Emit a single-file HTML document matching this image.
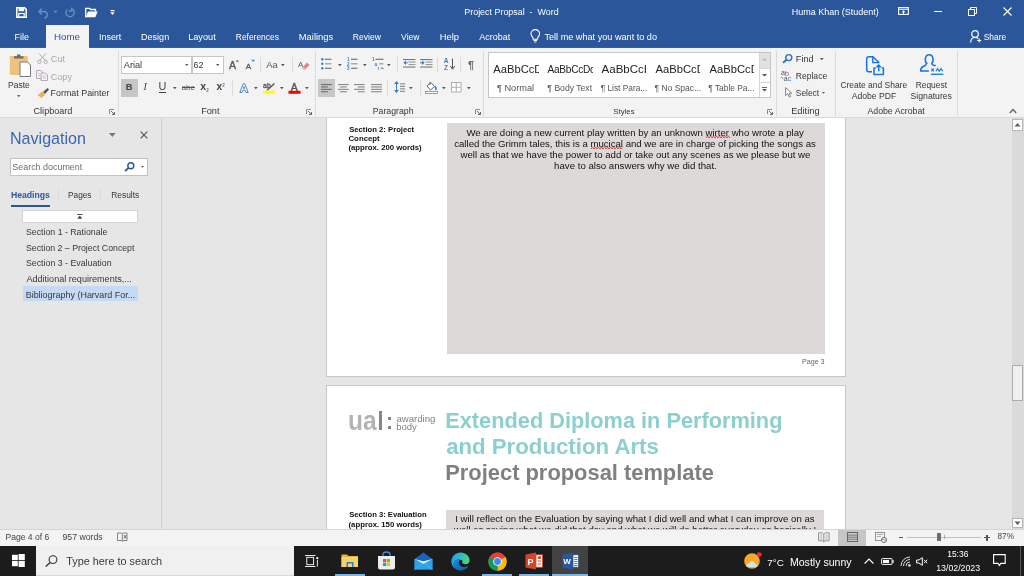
<!DOCTYPE html>
<html><head><meta charset="utf-8">
<style>
*{margin:0;padding:0;box-sizing:border-box}
html,body{width:1024px;height:576px;overflow:hidden;background:#e6e6e6;font-family:"Liberation Sans",sans-serif;position:relative}
.a{position:absolute}
.t{white-space:pre}
svg.a{overflow:visible}
#root{position:absolute;left:0;top:0;width:1024px;height:576px;overflow:hidden;will-change:transform}
</style></head><body>
<div id="root"><div class="a" style="left:0px;top:0px;width:1024px;height:48px;background:#2b579a;"></div>
<div class="a" style="left:0px;top:47px;width:1024px;height:1px;background:#3560a0;"></div>
<div class="a" style="left:46px;top:25px;width:43px;height:23px;background:#f3f3f3;"></div>
<div class="a" style="left:0px;top:48px;width:1024px;height:69px;background:#f3f3f3;"></div>
<div class="a" style="left:0px;top:117px;width:1024px;height:1px;background:#dadada;"></div>
<div class="a" style="left:0px;top:118px;width:161px;height:411px;background:#e6e6e6;"></div>
<div class="a" style="left:160px;top:118px;width:1px;height:411px;background:#e9e9e9;"></div>
<div class="a" style="left:161px;top:118px;width:1px;height:411px;background:#cdcdcd;"></div>
<div class="a" style="left:326px;top:118px;width:520px;height:259px;background:#fff;border:1px solid #c6c6c6;border-top:none"></div>
<div class="a" style="left:326px;top:385px;width:520px;height:160px;background:#fff;border:1px solid #c6c6c6;border-bottom:none"></div>
<div class="a" style="left:447px;top:123px;width:378px;height:231px;background:#dcd9d8;"></div>
<div class="a" style="left:446px;top:510px;width:378px;height:30px;background:#dcd9d8;"></div>
<div class="a" style="left:1012px;top:118px;width:12px;height:411px;background:#dadada;"></div>
<div class="a" style="left:1012px;top:119px;width:11px;height:12px;background:#fff;border:1px solid #b6b6b6"></div>
<svg class="a" style="left:1014px;top:122px" width="7" height="5" viewBox="0 0 7 5"><path d="M0.5 4.5 L3.5 1 L6.5 4.5 Z" fill="#5e5e5e"/></svg>
<div class="a" style="left:1012px;top:518px;width:11px;height:10px;background:#fff;border:1px solid #b6b6b6;z-index:2"></div>
<svg class="a" style="z-index:3;left:1014px;top:521px" width="7" height="5" viewBox="0 0 7 5"><path d="M0.5 0.5 L3.5 4 L6.5 0.5 Z" fill="#5e5e5e"/></svg>
<div class="a" style="left:1012px;top:365px;width:11px;height:36px;background:#efefef;border:1px solid #acacac"></div>
<div class="a" style="left:0px;top:529px;width:1024px;height:17px;background:#f3f3f3;border-top:1px solid #d4d4d4;z-index:2"></div>
<div class="a" style="left:838px;top:530px;width:28px;height:16px;background:#c6c6c6;z-index:2"></div>
<div class="a" style="left:0px;top:546px;width:1024px;height:30px;background:#1c1c1c;z-index:2"></div>
<div class="a" style="left:36px;top:546px;width:258px;height:30px;background:#f0f0f0;z-index:2;border-bottom:1px solid #d8d8d8"></div>
<div class="a" style="left:552px;top:546px;width:36px;height:30px;background:#424242;z-index:2"></div>
<div class="a" style="left:335px;top:574px;width:30px;height:2px;background:#7ab7e6;z-index:3"></div>
<div class="a" style="left:482px;top:574px;width:30px;height:2px;background:#7ab7e6;z-index:3"></div>
<div class="a" style="left:519px;top:574px;width:30px;height:2px;background:#7ab7e6;z-index:3"></div>
<div class="a" style="left:552px;top:574px;width:36px;height:2px;background:#7ab7e6;z-index:3"></div>
<div class="a" style="left:1020px;top:546px;width:1px;height:30px;background:#555;z-index:3"></div>
<svg class="a" style="left:16px;top:7px" width="11" height="11" viewBox="0 0 11 11"><path d="M0.8 0.8 H8.6 L10.2 2.4 V10.2 H0.8 Z" fill="none" stroke="#fff" stroke-width="1.5"/><rect x="2.6" y="0.8" width="5.6" height="3.4" fill="#fff"/><rect x="2.8" y="6.5" width="5.4" height="3.7" fill="none" stroke="#fff" stroke-width="1.2"/></svg>
<svg class="a" style="left:38px;top:7px" width="11" height="11" viewBox="0 0 11 11"><path d="M3.5 1.5 L1 4.5 L3.5 7.5 M1.2 4.5 H6.5 A3.3 3.3 0 0 1 6.5 11" fill="none" stroke="#6f8fc4" stroke-width="1.3"/></svg>
<svg class="a" style="left:53px;top:10px" width="5" height="4" viewBox="0 0 5 4"><path d="M0.5 0.8 L2.5 3 L4.5 0.8 Z" fill="#6f8fc4"/></svg>
<svg class="a" style="left:64px;top:7px" width="11" height="11" viewBox="0 0 11 11"><path d="M7.5 1.5 A4.2 4.2 0 1 1 3.2 2.4" fill="none" stroke="#6f8fc4" stroke-width="1.3"/><path d="M7.8 0.5 V4 H4.8" fill="none" stroke="#6f8fc4" stroke-width="1.3"/></svg>
<svg class="a" style="left:85px;top:7px" width="13" height="11" viewBox="0 0 13 11"><path d="M0.7 10.3 V1.3 H4.5 L5.5 2.5 H10.5 V4.5" fill="none" stroke="#fff" stroke-width="1.3"/><path d="M0.7 10.3 L3 4.5 H12.7 L10.3 10.3 Z" fill="#fff"/></svg>
<svg class="a" style="left:110px;top:10px" width="6" height="6" viewBox="0 0 6 6"><rect x="0.5" y="0" width="4" height="1.2" fill="#fff"/><path d="M0.3 2.3 H4.7 L2.5 5 Z" fill="#fff"/></svg>
<svg class="a" style="left:898px;top:7px" width="11" height="8" viewBox="0 0 11 8"><rect x="0.6" y="0.6" width="9.8" height="6.8" fill="none" stroke="#fff" stroke-width="1.1"/><line x1="0.6" y1="2.3" x2="10.4" y2="2.3" stroke="#fff" stroke-width="1"/><path d="M5.5 3.3 L3.5 5.3 H7.5 Z" fill="#fff"/><line x1="5.5" y1="4.5" x2="5.5" y2="7" stroke="#fff"/></svg>
<div class="a" style="left:934px;top:11px;width:8px;height:1px;background:#fff;"></div>
<svg class="a" style="left:968px;top:7px" width="9" height="9" viewBox="0 0 9 9"><rect x="0.5" y="2.5" width="6" height="6" fill="none" stroke="#fff" stroke-width="1"/><path d="M2.5 2.5 V0.5 H8.5 V6.5 H6.5" fill="none" stroke="#fff" stroke-width="1"/></svg>
<svg class="a" style="left:1003px;top:7px" width="9" height="9" viewBox="0 0 9 9"><path d="M0.5 0.5 L8.5 8.5 M8.5 0.5 L0.5 8.5" stroke="#fff" stroke-width="1.1"/></svg>
<svg class="a" style="left:530px;top:30px" width="11" height="13" viewBox="0 0 11 13"><path d="M3.2 9.2 C3.2 6.8 1 6 1 3.9 A4.3 4.3 0 0 1 9.6 3.9 C9.6 6 7.4 6.8 7.4 9.2 Z" fill="none" stroke="#fff" stroke-width="1.1"/><path d="M3.5 10.5 H7.1 M4.2 12 H6.4" stroke="#fff" stroke-width="1"/></svg>
<svg class="a" style="left:970px;top:30px" width="12" height="13" viewBox="0 0 12 13"><circle cx="5" cy="4" r="3.3" fill="none" stroke="#fff" stroke-width="1.2"/><path d="M0.7 12.5 C0.7 9 2.5 7.5 5 7.5 C6.5 7.5 7.5 8 8.2 8.7" fill="none" stroke="#fff" stroke-width="1.2"/><path d="M9.2 8.5 V12.5 M7.2 10.5 H11.2" stroke="#fff" stroke-width="1.1"/></svg>
<div class="a" style="left:118px;top:51px;width:1px;height:65px;background:#dadada;"></div>
<div class="a" style="left:315px;top:51px;width:1px;height:65px;background:#dadada;"></div>
<div class="a" style="left:483px;top:51px;width:1px;height:65px;background:#dadada;"></div>
<div class="a" style="left:776px;top:51px;width:1px;height:65px;background:#dadada;"></div>
<div class="a" style="left:835px;top:51px;width:1px;height:65px;background:#dadada;"></div>
<div class="a" style="left:957px;top:51px;width:1px;height:65px;background:#dadada;"></div>
<div class="a" style="left:260px;top:57px;width:1px;height:15px;background:#dadada;"></div>
<div class="a" style="left:292px;top:57px;width:1px;height:15px;background:#dadada;"></div>
<div class="a" style="left:232px;top:80px;width:1px;height:16px;background:#dadada;"></div>
<div class="a" style="left:397px;top:57px;width:1px;height:15px;background:#dadada;"></div>
<div class="a" style="left:437px;top:57px;width:1px;height:15px;background:#dadada;"></div>
<div class="a" style="left:460px;top:57px;width:1px;height:15px;background:#dadada;"></div>
<div class="a" style="left:387px;top:80px;width:1px;height:16px;background:#dadada;"></div>
<div class="a" style="left:420px;top:80px;width:1px;height:16px;background:#dadada;"></div>
<svg class="a" style="left:109px;top:109px" width="6" height="6" viewBox="0 0 6 6"><path d="M0.5 5 V0.5 H5" fill="none" stroke="#8a8a8a" stroke-width="1"/><path d="M2 2 L5.5 5.5 M5.5 3 V5.5 H3" fill="none" stroke="#6a6a6a" stroke-width="1"/></svg>
<svg class="a" style="left:306px;top:109px" width="6" height="6" viewBox="0 0 6 6"><path d="M0.5 5 V0.5 H5" fill="none" stroke="#8a8a8a" stroke-width="1"/><path d="M2 2 L5.5 5.5 M5.5 3 V5.5 H3" fill="none" stroke="#6a6a6a" stroke-width="1"/></svg>
<svg class="a" style="left:475px;top:109px" width="6" height="6" viewBox="0 0 6 6"><path d="M0.5 5 V0.5 H5" fill="none" stroke="#8a8a8a" stroke-width="1"/><path d="M2 2 L5.5 5.5 M5.5 3 V5.5 H3" fill="none" stroke="#6a6a6a" stroke-width="1"/></svg>
<svg class="a" style="left:767px;top:109px" width="6" height="6" viewBox="0 0 6 6"><path d="M0.5 5 V0.5 H5" fill="none" stroke="#8a8a8a" stroke-width="1"/><path d="M2 2 L5.5 5.5 M5.5 3 V5.5 H3" fill="none" stroke="#6a6a6a" stroke-width="1"/></svg>
<svg class="a" style="left:1009px;top:108px" width="8" height="6" viewBox="0 0 8 6"><path d="M0.8 5 L4 1.5 L7.2 5" fill="none" stroke="#666" stroke-width="1.4"/></svg>
<svg class="a" style="left:9px;top:54px" width="23" height="23" viewBox="0 0 23 23"><rect x="0.8" y="2" width="18" height="19" rx="1" fill="#edc27d"/><path d="M5 4.5 V2.3 H8 V0.6 H11.5 V2.3 H14.5 V4.5 Z" fill="#6b6b6b"/><path d="M11 8 H18.5 L21.5 11 V22.5 H11 Z" fill="#fff" stroke="#7a7a7a" stroke-width="1"/></svg>
<svg class="a" style="left:17px;top:95px" width="4" height="3" viewBox="0 0 4 3"><path d="M0 0 H3.5 L1.75 2.2 Z" fill="#666"/></svg>
<svg class="a" style="left:37px;top:53px" width="11" height="11" viewBox="0 0 11 11"><path d="M2 0.5 L8.5 7.5 M9 0.5 L2.5 7.5" stroke="#b0b0b0" stroke-width="1"/><circle cx="2.3" cy="8.8" r="1.7" fill="none" stroke="#b0b0b0"/><circle cx="8.7" cy="8.8" r="1.7" fill="none" stroke="#b0b0b0"/></svg>
<svg class="a" style="left:36px;top:70px" width="12" height="11" viewBox="0 0 12 11"><path d="M0.5 0.5 H5 L6.5 2 V8.5 H0.5 Z" fill="none" stroke="#b5a9b8" stroke-width="1"/><path d="M5 3 H9.5 L11.5 5 V10.5 H5 Z" fill="#f3f3f3" stroke="#b5a9b8" stroke-width="1"/><path d="M2 3.5 H4 M2 5.5 H4 M6.5 6 H10 M6.5 8 H10" stroke="#c0b8c4" stroke-width="0.8"/></svg>
<svg class="a" style="left:37px;top:88px" width="12" height="10" viewBox="0 0 12 10"><path d="M6 4 L10.5 0 L12 1.5 L8 6 Z" fill="#555"/><path d="M0.5 7 L5 3.5 L8.5 6.5 L4.5 10 Z" fill="#e5b565"/></svg>
<div class="a" style="left:121px;top:56px;width:71px;height:18px;background:#fff;border:1px solid #c6c6c6"></div>
<div class="a" style="left:192px;top:56px;width:32px;height:18px;background:#fff;border:1px solid #c6c6c6"></div>
<svg class="a" style="left:185px;top:64px" width="4" height="3" viewBox="0 0 4 3"><path d="M0 0 H3.5 L1.75 2 Z" fill="#555"/></svg>
<svg class="a" style="left:216px;top:64px" width="4" height="3" viewBox="0 0 4 3"><path d="M0 0 H3.5 L1.75 2 Z" fill="#555"/></svg>
<svg class="a" style="left:229px;top:59px" width="11" height="10" viewBox="0 0 11 10"><text x="0" y="9.6" font-family="Liberation Sans" font-size="10.5" fill="#555" stroke="#555" stroke-width="0.35">A</text><path d="M6.4 2.8 L8.3 0.7 L10.2 2.8 Z" fill="#3c7fc8"/></svg>
<svg class="a" style="left:245px;top:59px" width="11" height="10" viewBox="0 0 11 10"><text x="0.8" y="9.6" font-family="Liberation Sans" font-size="8" fill="#555" stroke="#555" stroke-width="0.3">A</text><path d="M6.3 0.8 H10.1 L8.2 2.9 Z" fill="#3c7fc8"/></svg>
<svg class="a" style="left:281px;top:64px" width="4" height="3" viewBox="0 0 4 3"><path d="M0 0 H3.7 L1.85 2.2 Z" fill="#555"/></svg>
<svg class="a" style="left:253.5px;top:87px" width="4" height="3" viewBox="0 0 4 3"><path d="M0 0 H3.7 L1.85 2.2 Z" fill="#555"/></svg>
<svg class="a" style="left:279.75px;top:87px" width="4" height="3" viewBox="0 0 4 3"><path d="M0 0 H3.7 L1.85 2.2 Z" fill="#555"/></svg>
<svg class="a" style="left:305px;top:87px" width="4" height="3" viewBox="0 0 4 3"><path d="M0 0 H3.7 L1.85 2.2 Z" fill="#555"/></svg>
<svg class="a" style="left:173px;top:87px" width="4" height="3" viewBox="0 0 4 3"><path d="M0 0 H3.7 L1.85 2.2 Z" fill="#555"/></svg>
<svg class="a" style="left:337.5px;top:64px" width="4" height="3" viewBox="0 0 4 3"><path d="M0 0 H3.7 L1.85 2.2 Z" fill="#555"/></svg>
<svg class="a" style="left:363px;top:64px" width="4" height="3" viewBox="0 0 4 3"><path d="M0 0 H3.7 L1.85 2.2 Z" fill="#555"/></svg>
<svg class="a" style="left:387px;top:64px" width="4" height="3" viewBox="0 0 4 3"><path d="M0 0 H3.7 L1.85 2.2 Z" fill="#555"/></svg>
<svg class="a" style="left:408.5px;top:87px" width="4" height="3" viewBox="0 0 4 3"><path d="M0 0 H3.7 L1.85 2.2 Z" fill="#555"/></svg>
<svg class="a" style="left:441.9px;top:87px" width="4" height="3" viewBox="0 0 4 3"><path d="M0 0 H3.7 L1.85 2.2 Z" fill="#555"/></svg>
<svg class="a" style="left:467px;top:87px" width="4" height="3" viewBox="0 0 4 3"><path d="M0 0 H3.7 L1.85 2.2 Z" fill="#555"/></svg>
<svg class="a" style="left:298px;top:59px" width="12" height="11" viewBox="0 0 12 11"><text x="0" y="7.5" font-family="Liberation Sans" font-size="8" fill="#555">A</text><path d="M4 9 L9 3.5 L11.5 6 L6.5 11 Z" fill="#e0808f"/><path d="M4 9 L5.5 7.5 L8 10 L6.5 11 Z" fill="#f0b0b8"/></svg>
<div class="a" style="left:121px;top:79px;width:17px;height:18px;background:#c6c6c6;"></div>
<div class="a t" style="left:143.5px;top:82px;font-size:10px;line-height:10px;color:#444;font-family:Liberation Serif;font-style:italic">I</div>
<div class="a" style="left:159px;top:91.5px;width:7px;height:1px;background:#444;"></div>
<div class="a" style="left:182px;top:87px;width:12.5px;height:1px;background:#555;"></div>
<svg class="a" style="left:239px;top:83px" width="11" height="10" viewBox="0 0 11 10"><path d="M0.8 9.5 L4.2 0.8 H5.8 L9.2 9.5 H7 L6.2 7.2 H3.8 L3 9.5 Z M4.4 5.4 H5.6 L5 3.5 Z" fill="#fff" stroke="#4a86c8" stroke-width="1" stroke-linejoin="round"/></svg>
<svg class="a" style="left:263px;top:82px" width="13" height="12" viewBox="0 0 13 12"><text x="0" y="6.3" font-family="Liberation Sans" font-size="7" fill="#555" stroke="#555" stroke-width="0.3">ab</text><path d="M4 8.3 L11.5 1.5" stroke="#555" stroke-width="1.4"/><rect x="0" y="8.8" width="12" height="3" fill="#ffff00"/></svg>
<svg class="a" style="left:288px;top:82px" width="13" height="12" viewBox="0 0 13 12"><text x="2.8" y="8.6" font-family="Liberation Sans" font-size="10.5" fill="#555" stroke="#555" stroke-width="0.4">A</text><rect x="0.5" y="8.8" width="12" height="3" fill="#ff0000"/></svg>
<svg class="a" style="left:321px;top:58px" width="11" height="12" viewBox="0 0 11 12"><circle cx="1.3" cy="1.3" r="1.2" fill="#3c7fc8"/><circle cx="1.3" cy="5.8" r="1.2" fill="#3c7fc8"/><circle cx="1.3" cy="10.3" r="1.2" fill="#3c7fc8"/><rect x="4" y="0.7" width="6.5" height="1.2" fill="#777"/><rect x="4" y="5.2" width="6.5" height="1.2" fill="#999"/><rect x="4" y="9.7" width="6.5" height="1.2" fill="#777"/></svg>
<svg class="a" style="left:347px;top:58px" width="11" height="12" viewBox="0 0 11 12"><text x="0" y="3" font-family="Liberation Sans" font-size="4.6" font-weight="700" fill="#3c7fc8">1</text><text x="0" y="7.8" font-family="Liberation Sans" font-size="4.6" font-weight="700" fill="#3c7fc8">2</text><text x="0" y="12.3" font-family="Liberation Sans" font-size="4.6" font-weight="700" fill="#3c7fc8">3</text><rect x="4" y="0.7" width="6.5" height="1.2" fill="#777"/><rect x="4" y="5.2" width="6.5" height="1.2" fill="#999"/><rect x="4" y="9.7" width="6.5" height="1.2" fill="#777"/></svg>
<svg class="a" style="left:372px;top:58px" width="12" height="12" viewBox="0 0 12 12"><text x="0" y="3.3" font-family="Liberation Sans" font-size="4.6" font-weight="700" fill="#3c7fc8">1</text><text x="2.6" y="7.8" font-family="Liberation Sans" font-size="4.6" font-weight="700" fill="#3c7fc8">a</text><rect x="6" y="9" width="1" height="3" fill="#7ab"/><rect x="3.5" y="0.7" width="8" height="1.2" fill="#777"/><rect x="7" y="5.2" width="4.5" height="1.2" fill="#999"/><rect x="9" y="9.7" width="2.5" height="1.2" fill="#777"/></svg>
<div class="a" style="left:318px;top:79px;width:17px;height:18px;background:#c6c6c6;"></div>
<svg class="a" style="left:321px;top:84px" width="12" height="8" viewBox="0 0 12 8"><rect x="0" y="0.0" width="10.7" height="1.1" fill="#6f6f6f"/><rect x="0" y="2.4" width="7" height="1.1" fill="#6f6f6f"/><rect x="0" y="4.8" width="10.7" height="1.1" fill="#6f6f6f"/><rect x="0" y="7.199999999999999" width="7" height="1.1" fill="#6f6f6f"/></svg>
<svg class="a" style="left:338px;top:84px" width="12" height="8" viewBox="0 0 12 8"><rect x="0" y="0.0" width="10.7" height="1.1" fill="#8a8a8a"/><rect x="1.85" y="2.4" width="7" height="1.1" fill="#8a8a8a"/><rect x="0" y="4.8" width="10.7" height="1.1" fill="#8a8a8a"/><rect x="1.85" y="7.199999999999999" width="7" height="1.1" fill="#8a8a8a"/></svg>
<svg class="a" style="left:354px;top:84px" width="12" height="8" viewBox="0 0 12 8"><rect x="0" y="0.0" width="10.7" height="1.1" fill="#8a8a8a"/><rect x="3.7" y="2.4" width="7" height="1.1" fill="#8a8a8a"/><rect x="0" y="4.8" width="10.7" height="1.1" fill="#8a8a8a"/><rect x="3.7" y="7.199999999999999" width="7" height="1.1" fill="#8a8a8a"/></svg>
<svg class="a" style="left:371px;top:84px" width="12" height="8" viewBox="0 0 12 8"><rect x="0" y="0.0" width="10.9" height="1.1" fill="#8a8a8a"/><rect x="0" y="2.4" width="10.9" height="1.1" fill="#8a8a8a"/><rect x="0" y="4.8" width="10.9" height="1.1" fill="#8a8a8a"/><rect x="0" y="7.199999999999999" width="10.9" height="1.1" fill="#8a8a8a"/></svg>
<svg class="a" style="left:394px;top:81px" width="12" height="13" viewBox="0 0 12 13"><path d="M2.5 0 L0 3 H5 Z M2.5 12 L0 9 H5 Z" fill="#3c7fc8"/><rect x="2" y="2" width="1" height="8" fill="#3c7fc8"/><rect x="6" y="2.3" width="5" height="1.1" fill="#888"/><rect x="6" y="4.8" width="5" height="1.1" fill="#888"/><rect x="6" y="7.3" width="5" height="1.1" fill="#888"/><rect x="6" y="9.8" width="5" height="1.1" fill="#888"/></svg>
<svg class="a" style="left:403px;top:59px" width="13" height="10" viewBox="0 0 13 10"><rect x="0" y="0" width="12.5" height="1.1" fill="#777"/><rect x="5.5" y="2.5" width="7" height="1.1" fill="#999"/><rect x="5.5" y="5" width="7" height="1.1" fill="#999"/><rect x="0" y="7.5" width="12.5" height="1.1" fill="#777"/><path d="M0.3 3.8 L3 1.6 V6 Z" fill="#3c7fc8"/><rect x="2.5" y="3.3" width="2.5" height="1" fill="#3c7fc8"/></svg>
<svg class="a" style="left:420px;top:59px" width="13" height="10" viewBox="0 0 13 10"><rect x="0" y="0" width="12.5" height="1.1" fill="#777"/><rect x="5.5" y="2.5" width="7" height="1.1" fill="#999"/><rect x="5.5" y="5" width="7" height="1.1" fill="#999"/><rect x="0" y="7.5" width="12.5" height="1.1" fill="#777"/><path d="M4.7 3.8 L2 1.6 V6 Z" fill="#3c7fc8"/><rect x="0" y="3.3" width="2.5" height="1" fill="#3c7fc8"/></svg>
<svg class="a" style="left:444px;top:58px" width="12" height="12" viewBox="0 0 12 12"><text x="-0.3" y="5.4" font-family="Liberation Sans" font-size="6.6" font-weight="700" fill="#3c7fc8">A</text><text x="0" y="11.8" font-family="Liberation Sans" font-size="6.6" font-weight="700" fill="#9b59c0">Z</text><rect x="8" y="0.5" width="1" height="10" fill="#555"/><path d="M6.3 8 L8.5 11.3 L10.7 8" fill="none" stroke="#555" stroke-width="1"/></svg>
<svg class="a" style="left:468px;top:59px" width="9" height="10" viewBox="0 0 9 10"><text x="0" y="9.5" font-family="Liberation Sans" font-size="11" font-weight="700" fill="#666">¶</text></svg>
<svg class="a" style="left:425px;top:81px" width="13" height="13" viewBox="0 0 13 13"><path d="M2 5 L6 1.5 L9.5 5.5 L5.5 9 Z" fill="#fff" stroke="#666" stroke-width="1"/><path d="M5 1 V4" stroke="#666" stroke-width="1"/><path d="M9.5 5.5 C11 6 11.5 7.5 10.5 9" fill="none" stroke="#3c7fc8" stroke-width="1.6"/><rect x="0.5" y="10.5" width="12" height="2" fill="#fff" stroke="#888" stroke-width="0.8"/></svg>
<svg class="a" style="left:451px;top:82px" width="10" height="10" viewBox="0 0 10 10"><rect x="0.5" y="0.5" width="9.5" height="9.5" fill="#fff" stroke="#b0b0b0" stroke-width="1"/><path d="M5.25 0.5 V10 M0.5 5.25 H10" stroke="#b0b0b0" stroke-width="1"/></svg>
<div class="a" style="left:488px;top:52px;width:283px;height:46px;background:#fff;border:1px solid #c6c6c6"></div>
<div class="a" style="left:759px;top:53px;width:11px;height:15px;background:#e1e1e1;"></div>
<div class="a" style="left:759px;top:68px;width:11px;height:1px;background:#d6d6d6;"></div>
<div class="a" style="left:759px;top:82px;width:11px;height:1px;background:#d6d6d6;"></div>
<div class="a" style="left:759px;top:53px;width:1px;height:44px;background:#d6d6d6;"></div>
<svg class="a" style="left:762px;top:58px" width="5" height="3" viewBox="0 0 5 3"><path d="M0 2.5 L2.5 0 L5 2.5 Z" fill="#bbb"/></svg>
<svg class="a" style="left:762px;top:74px" width="5" height="3" viewBox="0 0 5 3"><path d="M0 0 H5 L2.5 2.5 Z" fill="#555"/></svg>
<svg class="a" style="left:762px;top:87px" width="5" height="5" viewBox="0 0 5 5"><rect x="0" y="0" width="5" height="0.9" fill="#555"/><path d="M0 2 H5 L2.5 4.5 Z" fill="#555"/></svg>
<div class="a" style="left:490px;top:55px;width:49px;height:22px;overflow:hidden"><div class="a t" style="left:3.3px;top:9px;font-size:11.2px;line-height:11.2px;color:#222">AaBbCcDd</div></div>
<div class="a" style="left:545px;top:55px;width:48px;height:22px;overflow:hidden"><div class="a t" style="left:2.5px;top:10px;font-size:10.1px;line-height:10.1px;color:#222;letter-spacing:-0.25px">AaBbCcDd</div></div>
<div class="a" style="left:600px;top:55px;width:47px;height:22px;overflow:hidden"><div class="a t" style="left:1.6px;top:8.6px;font-size:11.5px;line-height:11.5px;color:#222">AaBbCcI</div></div>
<div class="a" style="left:653px;top:55px;width:47px;height:22px;overflow:hidden"><div class="a t" style="left:2.6px;top:9px;font-size:11.2px;line-height:11.2px;color:#222">AaBbCcDd</div></div>
<div class="a" style="left:707px;top:55px;width:47px;height:22px;overflow:hidden"><div class="a t" style="left:2.6px;top:9px;font-size:11.2px;line-height:11.2px;color:#222">AaBbCcDd</div></div>
<svg class="a" style="left:782px;top:54px" width="11" height="9" viewBox="0 0 11 9"><circle cx="6.8" cy="3.6" r="3" fill="none" stroke="#2f6fbb" stroke-width="1.4"/><path d="M4.6 5.8 L1 8.8" stroke="#2f6fbb" stroke-width="1.8"/></svg>
<svg class="a" style="left:820px;top:58px" width="4" height="3" viewBox="0 0 4 3"><path d="M0 0 H3.7 L1.85 2.2 Z" fill="#555"/></svg>
<svg class="a" style="left:781px;top:70px" width="13" height="11" viewBox="0 0 13 11"><text x="0" y="5.3" font-family="Liberation Sans" font-size="7" fill="#555">a</text><text x="3.8" y="5.6" font-family="Liberation Sans" font-size="7.6" fill="#8b4fb0">b</text><text x="2.8" y="10.8" font-family="Liberation Sans" font-size="7" fill="#555">a</text><text x="6.6" y="10.8" font-family="Liberation Sans" font-size="7.6" fill="#3c7fc8">c</text><path d="M0.3 7 L2.3 8.8" stroke="#3c7fc8" stroke-width="1"/></svg>
<svg class="a" style="left:785px;top:87px" width="8" height="11" viewBox="0 0 8 11"><path d="M0.6 0.6 V8.5 L2.6 6.7 L4.3 10.2 L5.7 9.5 L4 6.2 H6.8 Z" fill="#fff" stroke="#777" stroke-width="0.9"/></svg>
<svg class="a" style="left:822px;top:92px" width="3" height="2" viewBox="0 0 3 2"><path d="M0 0 H3 L1.5 1.8 Z" fill="#555"/></svg>
<svg class="a" style="left:866px;top:56px" width="19" height="20" viewBox="0 0 19 20"><path d="M6 15.8 H2.7 A2 2 0 0 1 0.7 13.8 V2.7 A2 2 0 0 1 2.7 0.7 H6.8 L13.2 6.8" fill="none" stroke="#1473e6" stroke-width="1.5" stroke-linejoin="round"/><path d="M6.8 0.7 V6.6 H13.2" fill="none" stroke="#1473e6" stroke-width="1.4"/><path d="M9.8 12 H8 V18.4 H17.4 V12 H15.6" fill="none" stroke="#1473e6" stroke-width="1.5" stroke-linejoin="round"/><path d="M12.7 15.2 V9.2 M10.5 11.3 L12.7 9 L14.9 11.3" fill="none" stroke="#1473e6" stroke-width="1.5"/></svg>
<svg class="a" style="left:920px;top:54px" width="24" height="21" viewBox="0 0 24 21"><path d="M6.7 9.3 C4.5 7.5 4.6 0.7 9.2 0.7 C13.8 0.7 13.9 7.5 11.7 9.3 C12 10.6 13.4 11.4 15.2 11.6" fill="none" stroke="#1473e6" stroke-width="1.5" stroke-linecap="round"/><path d="M6.7 9.3 C6.4 10.8 5 11.8 3.2 12.5 C1.2 13.3 0.6 15 0.7 17.1 H8.4" fill="none" stroke="#1473e6" stroke-width="1.5" stroke-linecap="round"/><path d="M11.4 14.5 L13.8 17.3 M13.8 14.5 L11.4 17.3" stroke="#1473e6" stroke-width="1.1"/><path d="M16 17.2 L17.6 14.6 L19.3 17.2 L21 14.6 L22.8 17.2" fill="none" stroke="#1473e6" stroke-width="1.1"/><rect x="10.9" y="19.6" width="12.4" height="1.3" fill="#1473e6"/></svg>
<svg class="a" style="left:109px;top:133px" width="7" height="4" viewBox="0 0 7 4"><path d="M0 0 H6.6 L3.3 4 Z" fill="#777"/></svg>
<svg class="a" style="left:140px;top:131px" width="8" height="8" viewBox="0 0 8 8"><path d="M0.7 0.7 L7.3 7.3 M7.3 0.7 L0.7 7.3" stroke="#555" stroke-width="1.2"/></svg>
<div class="a" style="left:10px;top:158px;width:138px;height:18px;background:#fff;border:1px solid #c2c2c2"></div>
<svg class="a" style="left:124px;top:162px" width="11" height="10" viewBox="0 0 11 10"><circle cx="6.8" cy="3.7" r="3" fill="none" stroke="#2b579a" stroke-width="1.4"/><path d="M4.6 5.9 L1 9" stroke="#2b579a" stroke-width="1.7"/></svg>
<svg class="a" style="left:141px;top:166px" width="3" height="2" viewBox="0 0 3 2"><path d="M0 0 H3 L1.5 1.8 Z" fill="#555"/></svg>
<div class="a" style="left:58px;top:188px;width:1px;height:14px;background:#dcdcdc;"></div>
<div class="a" style="left:100px;top:188px;width:1px;height:14px;background:#dcdcdc;"></div>
<div class="a" style="left:11px;top:205px;width:39px;height:2px;background:#2b579a;"></div>
<div class="a" style="left:22px;top:210px;width:116px;height:13px;background:#fff;border:1px solid #d4d4d4"></div>
<svg class="a" style="left:77px;top:214px" width="6" height="5" viewBox="0 0 6 5"><rect x="0" y="0" width="5.6" height="0.9" fill="#444"/><path d="M0.3 4.8 L2.8 1.6 L5.3 4.8 Z" fill="#444"/></svg>
<div class="a" style="left:23px;top:286px;width:115px;height:15px;background:#c5daf4;"></div>
<svg class="a" style="left:706px;top:136px" width="25" height="2" viewBox="0 0 25 2"><path d="M0 1.7 L1.5 0.3 L3.0 1.7 L4.5 0.3 L6.0 1.7 L7.5 0.3 L9.0 1.7 L10.5 0.3 L12.0 1.7 L13.5 0.3 L15.0 1.7 L16.5 0.3 L18.0 1.7 L19.5 0.3 L21.0 1.7 L22.5 0.3 L24.0 1.7" fill="none" stroke="#e8202a" stroke-width="1"/></svg>
<svg class="a" style="left:591px;top:147px" width="33" height="2" viewBox="0 0 33 2"><path d="M0 1.7 L1.5 0.3 L3.0 1.7 L4.5 0.3 L6.0 1.7 L7.5 0.3 L9.0 1.7 L10.5 0.3 L12.0 1.7 L13.5 0.3 L15.0 1.7 L16.5 0.3 L18.0 1.7 L19.5 0.3 L21.0 1.7 L22.5 0.3 L24.0 1.7 L25.5 0.3 L27.0 1.7 L28.5 0.3 L30.0 1.7 L31.5 0.3" fill="none" stroke="#e8202a" stroke-width="1"/></svg>
<div class="a t" style="left:347.5px;top:406px;font-size:28.5px;line-height:28.5px;color:#b3b3b3;font-weight:700;transform:scaleX(0.86);transform-origin:0 0">ua</div>
<div class="a" style="left:378.7px;top:411.1px;width:3.5px;height:19.1px;background:#858585;"></div>
<div class="a" style="left:387.5px;top:417.3px;width:3.1px;height:3.2px;background:#858585;"></div>
<div class="a" style="left:387.5px;top:426.2px;width:3.1px;height:3.2px;background:#858585;"></div>
<svg class="a" style="z-index:3;left:117px;top:532px" width="11" height="10" viewBox="0 0 11 10"><path d="M0.5 1 H4.5 L5.3 1.8 L6.1 1 H10 V8.5 H6.1 L5.3 9.3 L4.5 8.5 H0.5 Z M5.3 1.8 V9.3" fill="none" stroke="#777" stroke-width="0.9"/><path d="M6.8 3 L9.3 6.5 M9.3 3 L6.8 6.5" stroke="#666" stroke-width="0.9"/></svg>
<svg class="a" style="z-index:3;left:818px;top:532px" width="12" height="10" viewBox="0 0 12 10"><path d="M0.5 0.8 H4.5 L5.8 2 L7.1 0.8 H11.1 V8.8 H7.1 L5.8 10 L4.5 8.8 H0.5 Z M5.8 2 V10" fill="none" stroke="#888" stroke-width="0.9"/><path d="M1.8 3 H4.3 M1.8 5 H4.3 M1.8 7 H4.3 M7.3 3 H9.8 M7.3 5 H9.8 M7.3 7 H9.8" stroke="#999" stroke-width="0.7"/></svg>
<svg class="a" style="z-index:3;left:847px;top:532px" width="11" height="10" viewBox="0 0 11 10"><rect x="0.5" y="0.5" width="10" height="9" fill="none" stroke="#666" stroke-width="1"/><path d="M1 3.2 H10 M1 5.2 H10 M1 7.2 H10" stroke="#777" stroke-width="0.9"/></svg>
<svg class="a" style="z-index:3;left:875px;top:532px" width="12" height="11" viewBox="0 0 12 11"><rect x="0.5" y="0.5" width="9" height="8" fill="none" stroke="#888" stroke-width="0.9"/><path d="M2 2.5 H8 M2 4.5 H6" stroke="#999" stroke-width="0.8"/><circle cx="9" cy="8" r="2.6" fill="#f3f3f3" stroke="#666" stroke-width="0.9"/><path d="M7 7.5 C8 6.5 10 9 11 8" fill="none" stroke="#666" stroke-width="0.7"/></svg>
<div class="a" style="left:899px;top:537px;width:4px;height:1.3px;background:#555;z-index:3"></div>
<div class="a" style="left:907px;top:537px;width:74px;height:1px;background:#c2c2c2;z-index:3"></div>
<div class="a" style="left:937px;top:533px;width:4px;height:8px;background:#6f6f6f;z-index:3"></div>
<div class="a" style="left:944px;top:535px;width:1px;height:4px;background:#aaa;z-index:3"></div>
<div class="a" style="left:984px;top:537px;width:6px;height:1.3px;background:#555;z-index:3"></div>
<div class="a" style="left:986.3px;top:534.7px;width:1.3px;height:6px;background:#555;z-index:3"></div>
<svg class="a" style="z-index:3;left:12px;top:554px" width="13" height="13" viewBox="0 0 13 13"><rect x="0" y="0.8" width="5.8" height="5.3" fill="#fff"/><rect x="6.6" y="0" width="6.2" height="6.1" fill="#fff"/><rect x="0" y="6.9" width="5.8" height="5.3" fill="#fff"/><rect x="6.6" y="6.9" width="6.2" height="6.1" fill="#fff"/></svg>
<svg class="a" style="z-index:3;left:45px;top:555px" width="13" height="12" viewBox="0 0 13 12"><circle cx="8" cy="4.6" r="3.9" fill="none" stroke="#333" stroke-width="1.1"/><path d="M5.2 7.4 L0.7 11.6" stroke="#333" stroke-width="1.3"/></svg>
<svg class="a" style="z-index:3;left:305px;top:555px" width="14" height="12" viewBox="0 0 14 12"><rect x="1.8" y="2.3" width="6.8" height="7.4" fill="none" stroke="#fff" stroke-width="0.9"/><path d="M0 0.5 H10.5 M0 11.5 H10.5" stroke="#fff" stroke-width="0.9"/><circle cx="12.3" cy="3.2" r="1.1" fill="#fff"/><rect x="11.9" y="5" width="0.9" height="6.5" fill="#fff"/></svg>
<svg class="a" style="z-index:3;left:341px;top:553px" width="18" height="15" viewBox="0 0 18 15"><path d="M0.5 1.5 H6 L7.5 3 H17 V14 H0.5 Z" fill="#e8b43a"/><rect x="0.5" y="4" width="16.5" height="10" fill="#f8d267"/><rect x="5.5" y="9" width="7" height="5" fill="#2c7cd3"/><rect x="7" y="10.5" width="4" height="3.5" fill="#f8d267"/></svg>
<svg class="a" style="z-index:3;left:377px;top:552px" width="19" height="18" viewBox="0 0 19 18"><path d="M6 4 V2.5 A3.5 2.5 0 0 1 13 2.5 V4" fill="none" stroke="#3a8ee6" stroke-width="1.3"/><path d="M1 4 H18 V15.5 A2 2 0 0 1 16 17.5 H3 A2 2 0 0 1 1 15.5 Z" fill="#ededed"/><rect x="6" y="7" width="3.2" height="3.2" fill="#f25022"/><rect x="9.8" y="7" width="3.2" height="3.2" fill="#7fba00"/><rect x="6" y="10.8" width="3.2" height="3.2" fill="#00a4ef"/><rect x="9.8" y="10.8" width="3.2" height="3.2" fill="#ffb900"/></svg>
<svg class="a" style="z-index:3;left:414px;top:552px" width="19" height="18" viewBox="0 0 19 18"><path d="M0.5 7 L9.5 0.5 L18.5 7 V17.5 H0.5 Z" fill="#1565c0"/><path d="M0.5 7 L9.5 12 L18.5 7 V17.5 H0.5 Z" fill="#29a3ea"/><path d="M0.5 7 L9.5 12 L18.5 7 L9.5 9.3 Z" fill="#e8eef5"/><path d="M0.5 17.5 L8 11.5 M18.5 17.5 L11 11.5" stroke="#50b8f0" stroke-width="0.8"/></svg>
<svg class="a" style="z-index:3;left:451px;top:552px" width="19" height="19" viewBox="0 0 19 19"><defs><linearGradient id="eg" x1="0" y1="0.2" x2="1" y2="0.6"><stop offset="0" stop-color="#1f9fe6"/><stop offset="0.55" stop-color="#2fc4b8"/><stop offset="1" stop-color="#62d857"/></linearGradient><linearGradient id="eg2" x1="0" y1="0" x2="1" y2="1"><stop offset="0" stop-color="#1a8ee0"/><stop offset="1" stop-color="#0d56a6"/></linearGradient></defs><path d="M9.5 0.6 C14.8 0.6 18.6 4.3 18.6 8.6 C18.6 11 16.8 12.2 14.6 12.2 C12.4 12.2 10.8 11.4 10.8 9.8 C10.8 8.6 9.4 7.4 7.6 7.4 C4.6 7.4 2.6 9.6 2.6 12.2 C2.6 15.6 5.8 18.4 9.6 18.4 C4.5 18.4 0.4 14.4 0.4 9.5 C0.4 4.6 4.4 0.6 9.5 0.6 Z" fill="url(#eg)"/><path d="M7.6 7.4 C4.6 7.4 2.6 9.6 2.6 12.2 C2.6 15.6 5.8 18.4 9.6 18.4 C13.6 18.4 16.6 16.4 17.8 13.6 C16.6 14.6 14.8 15 13.2 15 C10.2 15 7.8 13.4 7.8 10.8 C7.8 9.8 8.3 8.9 9.3 8.2 C8.8 7.7 8.2 7.4 7.6 7.4 Z" fill="url(#eg2)"/><ellipse cx="9.8" cy="9.4" rx="1.6" ry="1.7" fill="#1c1c1c"/></svg>
<svg class="a" style="z-index:3;left:488px;top:552px" width="19" height="19" viewBox="0 0 19 19"><circle cx="9.5" cy="9.5" r="9.2" fill="#db4437"/><path d="M9.5 9.5 L17.5 5 A9.2 9.2 0 0 1 9.5 18.7 Z" fill="#fbbc05"/><path d="M9.5 9.5 L9.5 18.7 A9.2 9.2 0 0 1 1.5 5 Z" fill="#0f9d58"/><circle cx="9.5" cy="9.5" r="4.3" fill="#fff"/><circle cx="9.5" cy="9.5" r="3.4" fill="#4285f4"/></svg>
<svg class="a" style="z-index:3;left:525px;top:552px" width="18" height="18" viewBox="0 0 18 18"><path d="M0.5 2.5 L11 0.5 V17.5 L0.5 15.5 Z" fill="#d24625"/><rect x="11" y="2.8" width="6.5" height="12.4" fill="#fff" stroke="#d24625" stroke-width="0.8"/><path d="M12.5 6 H16 M12.5 9 H16 M12.5 12 H16" stroke="#d24625" stroke-width="1"/><circle cx="14.5" cy="5.5" r="1.6" fill="#d24625"/><text x="2.5" y="12.5" font-family="Liberation Sans" font-size="9" font-weight="700" fill="#fff">P</text></svg>
<svg class="a" style="z-index:3;left:562px;top:552px" width="17" height="18" viewBox="0 0 17 18"><path d="M0.5 2.5 L11 0.5 V17.5 L0.5 15.5 Z" fill="#2b579a"/><rect x="11" y="2.8" width="5.5" height="12.4" fill="#fff" stroke="#2b579a" stroke-width="0.8"/><path d="M12.2 5.5 H15.5 M12.2 7.5 H15.5 M12.2 9.5 H15.5 M12.2 11.5 H15.5 M12.2 13.5 H15.5" stroke="#2b579a" stroke-width="0.8"/><text x="1.2" y="12.3" font-family="Liberation Sans" font-size="8" font-weight="700" fill="#fff">W</text></svg>
<svg class="a" style="z-index:3;left:744px;top:552px" width="19" height="17" viewBox="0 0 19 17"><circle cx="8" cy="9" r="7.8" fill="#f7a928"/><path d="M4 15 C3 15 2 14 2.5 12.7 C3 11.6 4 11.5 4.8 11.8 C5.3 10 7 9 8.8 9.5 C10 9.8 11 10.8 11.2 12 C12.5 12 13.5 12.8 13.3 14 C13.2 14.8 12.5 15.2 11.8 15.2 Z" fill="#cfe3f7"/><circle cx="15.2" cy="2.6" r="2.4" fill="#e5302a"/></svg>
<svg class="a" style="z-index:3;left:864px;top:558px" width="10" height="6" viewBox="0 0 10 6"><path d="M0.6 5.5 L5 1 L9.4 5.5" fill="none" stroke="#fff" stroke-width="1.1"/></svg>
<svg class="a" style="z-index:3;left:881px;top:558px" width="13" height="7" viewBox="0 0 13 7"><rect x="0.6" y="0.6" width="10.5" height="5.8" rx="0.8" fill="none" stroke="#fff" stroke-width="1"/><rect x="2" y="2" width="6" height="3" fill="#fff"/><rect x="11.5" y="2.3" width="1.2" height="2.4" fill="#fff"/></svg>
<svg class="a" style="z-index:3;left:900px;top:556px" width="11" height="11" viewBox="0 0 11 11"><path d="M1 10 A9 9 0 0 1 10 1 M3.5 10 A6.5 6.5 0 0 1 10 3.5 M6 10 A4 4 0 0 1 10 6" fill="none" stroke="#ddd" stroke-width="1"/><rect x="8.3" y="8.3" width="2.2" height="2.2" fill="#fff"/></svg>
<svg class="a" style="z-index:3;left:916px;top:557px" width="12" height="9" viewBox="0 0 12 9"><path d="M0.6 3 H3 L6.3 0.6 V8.4 L3 6 H0.6 Z" fill="none" stroke="#fff" stroke-width="1"/><path d="M8 2.8 L11.2 6.2 M11.2 2.8 L8 6.2" stroke="#fff" stroke-width="1"/></svg>
<svg class="a" style="z-index:3;left:993px;top:554px" width="13" height="13" viewBox="0 0 13 13"><path d="M0.6 0.6 H12.2 V9.4 H7.8 L6.4 11.6 L5 9.4 H0.6 Z" fill="none" stroke="#fff" stroke-width="1.1"/></svg>
<div class="a t" style="left:464.29px;top:8.00px;font-size:8.92px;line-height:8.92px;color:#fff;font-weight:400;">Project Propsal  -  Word</div>
<div class="a t" style="left:791.68px;top:8.00px;font-size:9.00px;line-height:9.00px;color:#fff;font-weight:400;">Huma Khan (Student)</div>
<div class="a t" style="left:14.48px;top:33.00px;font-size:8.99px;line-height:8.99px;color:#fff;font-weight:400;">File</div>
<div class="a t" style="left:99.00px;top:33.00px;font-size:8.92px;line-height:8.92px;color:#fff;font-weight:400;">Insert</div>
<div class="a t" style="left:141.08px;top:33.00px;font-size:9.02px;line-height:9.02px;color:#fff;font-weight:400;">Design</div>
<div class="a t" style="left:188.17px;top:33.00px;font-size:9.18px;line-height:9.18px;color:#fff;font-weight:400;">Layout</div>
<div class="a t" style="left:235.82px;top:33.00px;font-size:8.44px;line-height:8.44px;color:#fff;font-weight:400;">References</div>
<div class="a t" style="left:298.75px;top:32.00px;font-size:9.41px;line-height:9.41px;color:#fff;font-weight:400;">Mailings</div>
<div class="a t" style="left:352.81px;top:33.00px;font-size:8.56px;line-height:8.56px;color:#fff;font-weight:400;">Review</div>
<div class="a t" style="left:401.11px;top:33.00px;font-size:8.60px;line-height:8.60px;color:#fff;font-weight:400;">View</div>
<div class="a t" style="left:439.75px;top:33.00px;font-size:9.33px;line-height:9.33px;color:#fff;font-weight:400;">Help</div>
<div class="a t" style="left:479.20px;top:33.00px;font-size:9.01px;line-height:9.01px;color:#fff;font-weight:400;">Acrobat</div>
<div class="a t" style="left:544.42px;top:33.00px;font-size:9.14px;line-height:9.14px;color:#fff;font-weight:400;">Tell me what you want to do</div>
<div class="a t" style="left:54.02px;top:32.00px;font-size:9.76px;line-height:9.76px;color:#2b579a;font-weight:400;">Home</div>
<div class="a t" style="left:983.78px;top:33.00px;font-size:8.41px;line-height:8.41px;color:#fff;font-weight:400;">Share</div>
<div class="a t" style="left:33.55px;top:107.00px;font-size:9.09px;line-height:9.09px;color:#363636;font-weight:400;">Clipboard</div>
<div class="a t" style="left:201.17px;top:107.00px;font-size:9.16px;line-height:9.16px;color:#363636;font-weight:400;">Font</div>
<div class="a t" style="left:372.80px;top:107.00px;font-size:8.72px;line-height:8.72px;color:#363636;font-weight:400;">Paragraph</div>
<div class="a t" style="left:613.31px;top:108.00px;font-size:7.80px;line-height:7.80px;color:#363636;font-weight:400;">Styles</div>
<div class="a t" style="left:791.15px;top:107.00px;font-size:9.31px;line-height:9.31px;color:#363636;font-weight:400;">Editing</div>
<div class="a t" style="left:867.50px;top:107.00px;font-size:8.72px;line-height:8.72px;color:#363636;font-weight:400;">Adobe Acrobat</div>
<div class="a t" style="left:8.07px;top:81.00px;font-size:8.50px;line-height:8.50px;color:#363636;font-weight:400;">Paste</div>
<div class="a t" style="left:50.79px;top:55.00px;font-size:9.17px;line-height:9.17px;color:#a8a8a8;font-weight:400;">Cut</div>
<div class="a t" style="left:50.80px;top:73.00px;font-size:9.06px;line-height:9.06px;color:#a8a8a8;font-weight:400;">Copy</div>
<div class="a t" style="left:50.54px;top:89.00px;font-size:8.92px;line-height:8.92px;color:#363636;font-weight:400;">Format Painter</div>
<div class="a t" style="left:123.75px;top:61.00px;font-size:9.20px;line-height:9.20px;color:#363636;font-weight:400;">Arial</div>
<div class="a t" style="left:193.55px;top:61.00px;font-size:9.01px;line-height:9.01px;color:#363636;font-weight:400;">62</div>
<div class="a t" style="left:266.25px;top:60.00px;font-size:9.43px;line-height:9.43px;color:#555;font-weight:400;">Aa</div>
<div class="a t" style="left:125.84px;top:82.00px;font-size:9.43px;line-height:9.43px;color:#444;font-weight:700;">B</div>
<div class="a t" style="left:158.53px;top:81.00px;font-size:10.88px;line-height:10.88px;color:#444;font-weight:400;">U</div>
<div class="a t" style="left:181.58px;top:84.00px;font-size:8.06px;line-height:8.06px;color:#555;font-weight:400;">abc</div>
<div class="a t" style="left:200.14px;top:81.00px;font-size:10.65px;line-height:10.65px;color:#444;font-weight:700;">x</div>
<div class="a t" style="left:206.37px;top:89.00px;font-size:4.50px;line-height:4.50px;color:#3c7fc8;font-weight:700;">2</div>
<div class="a t" style="left:216.40px;top:82.00px;font-size:10.19px;line-height:10.19px;color:#444;font-weight:700;">x</div>
<div class="a t" style="left:222.37px;top:84.00px;font-size:4.50px;line-height:4.50px;color:#3c7fc8;font-weight:700;">2</div>
<div class="a t" style="left:496.93px;top:84.00px;font-size:9.21px;line-height:9.21px;color:#555;font-weight:400;">¶ Normal</div>
<div class="a t" style="left:547.36px;top:84.00px;font-size:8.62px;line-height:8.62px;color:#555;font-weight:400;">¶ Body Text</div>
<div class="a t" style="left:600.67px;top:84.00px;font-size:8.34px;line-height:8.34px;color:#555;font-weight:400;">¶ List Para...</div>
<div class="a t" style="left:654.46px;top:84.00px;font-size:8.54px;line-height:8.54px;color:#555;font-weight:400;">¶ No Spac...</div>
<div class="a t" style="left:708.26px;top:84.00px;font-size:8.39px;line-height:8.39px;color:#555;font-weight:400;">¶ Table Pa...</div>
<div class="a t" style="left:795.76px;top:55.00px;font-size:9.22px;line-height:9.22px;color:#363636;font-weight:400;">Find</div>
<div class="a t" style="left:795.81px;top:72.00px;font-size:8.56px;line-height:8.56px;color:#363636;font-weight:400;">Replace</div>
<div class="a t" style="left:795.83px;top:89.00px;font-size:8.36px;line-height:8.36px;color:#363636;font-weight:400;">Select</div>
<div class="a t" style="left:840.38px;top:81.00px;font-size:8.46px;line-height:8.46px;color:#363636;font-weight:400;">Create and Share</div>
<div class="a t" style="left:851.80px;top:92.00px;font-size:8.58px;line-height:8.58px;color:#363636;font-weight:400;">Adobe PDF</div>
<div class="a t" style="left:915.63px;top:81.00px;font-size:8.43px;line-height:8.43px;color:#363636;font-weight:400;">Request</div>
<div class="a t" style="left:910.57px;top:92.00px;font-size:8.66px;line-height:8.66px;color:#363636;font-weight:400;">Signatures</div>
<div class="a t" style="left:10.01px;top:130.00px;font-size:16.09px;line-height:16.09px;color:#3a66ae;font-weight:400;">Navigation</div>
<div class="a t" style="left:12.30px;top:163.00px;font-size:8.94px;line-height:8.94px;color:#6d6d6d;font-weight:400;">Search document</div>
<div class="a t" style="left:10.89px;top:191.00px;font-size:8.68px;line-height:8.68px;color:#2b579a;font-weight:700;">Headings</div>
<div class="a t" style="left:68.04px;top:192.00px;font-size:8.27px;line-height:8.27px;color:#383838;font-weight:400;">Pages</div>
<div class="a t" style="left:111.23px;top:191.00px;font-size:8.42px;line-height:8.42px;color:#383838;font-weight:400;">Results</div>
<div class="a t" style="left:25.96px;top:228.00px;font-size:8.78px;line-height:8.78px;color:#383838;font-weight:400;">Section 1 - Rationale</div>
<div class="a t" style="left:25.96px;top:244.00px;font-size:8.76px;line-height:8.76px;color:#383838;font-weight:400;">Section 2 – Project Concept</div>
<div class="a t" style="left:25.96px;top:259.00px;font-size:8.81px;line-height:8.81px;color:#383838;font-weight:400;">Section 3 - Evaluation</div>
<div class="a t" style="left:26.40px;top:275.00px;font-size:9.08px;line-height:9.08px;color:#383838;font-weight:400;">Additional requirements,...</div>
<div class="a t" style="left:25.68px;top:291.00px;font-size:8.96px;line-height:8.96px;color:#383838;font-weight:400;">Bibliography (Harvard For...</div>
<div class="a t" style="left:349.17px;top:126.00px;font-size:7.69px;line-height:7.69px;color:#111;font-weight:700;">Section 2: Project</div>
<div class="a t" style="left:348.49px;top:135.00px;font-size:7.80px;line-height:7.80px;color:#111;font-weight:700;">Concept</div>
<div class="a t" style="left:348.41px;top:144.00px;font-size:7.76px;line-height:7.76px;color:#111;font-weight:700;">(approx. 200 words)</div>
<div class="a t" style="left:466.40px;top:128.00px;font-size:9.62px;line-height:9.62px;color:#121212;font-weight:400;">We are doing a new current play written by an unknown wirter who wrote a play</div>
<div class="a t" style="left:454.22px;top:139.00px;font-size:9.62px;line-height:9.62px;color:#121212;font-weight:400;">called the Grimm tales, this is a mucical and we are in charge of picking the songs as</div>
<div class="a t" style="left:460.50px;top:150.00px;font-size:9.62px;line-height:9.62px;color:#121212;font-weight:400;">well as that we have the power to add or take out any scenes as we please but we</div>
<div class="a t" style="left:554.12px;top:161.00px;font-size:9.66px;line-height:9.66px;color:#121212;font-weight:400;">have to also answers why we did that.</div>
<div class="a t" style="left:801.93px;top:359.00px;font-size:7.15px;line-height:7.15px;color:#666;font-weight:400;">Page 3</div>
<div class="a t" style="left:396.41px;top:414.00px;font-size:9.65px;line-height:9.65px;color:#7f7f7f;font-weight:400;">awarding</div>
<div class="a t" style="left:396.23px;top:422.00px;font-size:9.52px;line-height:9.52px;color:#7f7f7f;font-weight:400;">body</div>
<div class="a t" style="left:445.28px;top:410.00px;font-size:21.76px;line-height:21.76px;color:#8ccfcf;font-weight:700;">Extended Diploma in Performing</div>
<div class="a t" style="left:446.13px;top:436.00px;font-size:22.23px;line-height:22.23px;color:#8ccfcf;font-weight:700;">and Production Arts</div>
<div class="a t" style="left:445.27px;top:462.00px;font-size:21.89px;line-height:21.89px;color:#808080;font-weight:700;">Project proposal template</div>
<div class="a t" style="left:349.17px;top:511.00px;font-size:7.66px;line-height:7.66px;color:#111;font-weight:700;">Section 3: Evaluation</div>
<div class="a t" style="left:348.51px;top:521.00px;font-size:7.78px;line-height:7.78px;color:#111;font-weight:700;">(approx. 150 words)</div>
<div class="a t" style="left:455.13px;top:514.00px;font-size:9.63px;line-height:9.63px;color:#121212;font-weight:400;">I will reflect on the Evaluation by saying what I did well and what I can improve on as</div>
<div class="a t" style="left:454.00px;top:525.00px;font-size:9.61px;line-height:9.61px;color:#121212;font-weight:400;">well as saying what we did that day and what we will do better everyday as basically I</div>
<div class="a t" style="left:5.46px;top:533.00px;font-size:8.57px;line-height:8.57px;color:#444;font-weight:400;z-index:3">Page 4 of 6</div>
<div class="a t" style="left:62.47px;top:533.00px;font-size:8.70px;line-height:8.70px;color:#444;font-weight:400;z-index:3">957 words</div>
<div class="a t" style="left:997.47px;top:533.00px;font-size:8.24px;line-height:8.24px;color:#444;font-weight:400;z-index:3">87%</div>
<div class="a t" style="left:66.18px;top:556.00px;font-size:10.86px;line-height:10.86px;color:#3a3a3a;font-weight:400;z-index:3">Type here to search</div>
<div class="a t" style="left:767.31px;top:558.00px;font-size:9.87px;line-height:9.87px;color:#fff;font-weight:400;z-index:3">7°C</div>
<div class="a t" style="left:789.95px;top:557.00px;font-size:10.57px;line-height:10.57px;color:#fff;font-weight:400;z-index:3">Mostly sunny</div>
<div class="a t" style="left:947.22px;top:550.00px;font-size:8.45px;line-height:8.45px;color:#fff;font-weight:400;z-index:3">15:36</div>
<div class="a t" style="left:936.20px;top:564.00px;font-size:8.79px;line-height:8.79px;color:#fff;font-weight:400;z-index:3">13/02/2023</div>
</div></body></html>
